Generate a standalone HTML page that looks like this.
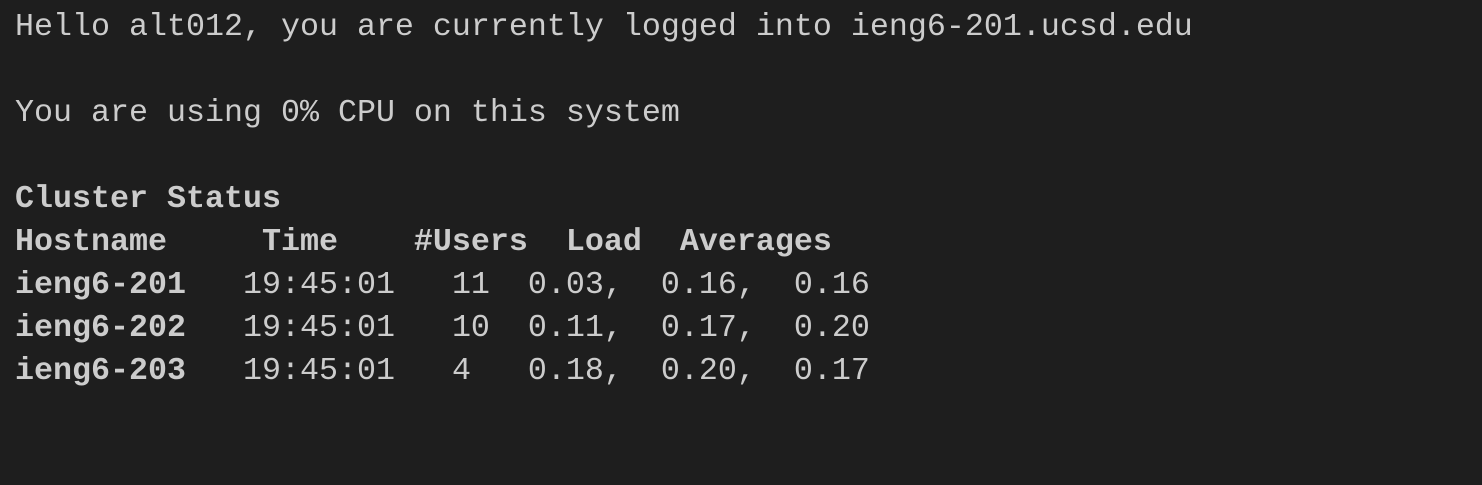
<!DOCTYPE html>
<html><head><meta charset="utf-8"><style>
html,body{margin:0;padding:0;background:#1e1e1e;width:1482px;height:485px;overflow:hidden}
pre{margin:0;position:absolute;left:15px;top:6px;font-family:"Liberation Mono",monospace;font-size:31.67px;line-height:43px;color:#cccccc}
b{font-weight:bold}
</style></head><body>
<pre>Hello alt012, you are currently logged into ieng6-201.ucsd.edu

You are using 0% CPU on this system

<b>Cluster Status</b>
<b>Hostname     Time    #Users  Load  Averages</b>
<b>ieng6-201</b>   19:45:01   11  0.03,  0.16,  0.16
<b>ieng6-202</b>   19:45:01   10  0.11,  0.17,  0.20
<b>ieng6-203</b>   19:45:01   4   0.18,  0.20,  0.17</pre>
</body></html>
